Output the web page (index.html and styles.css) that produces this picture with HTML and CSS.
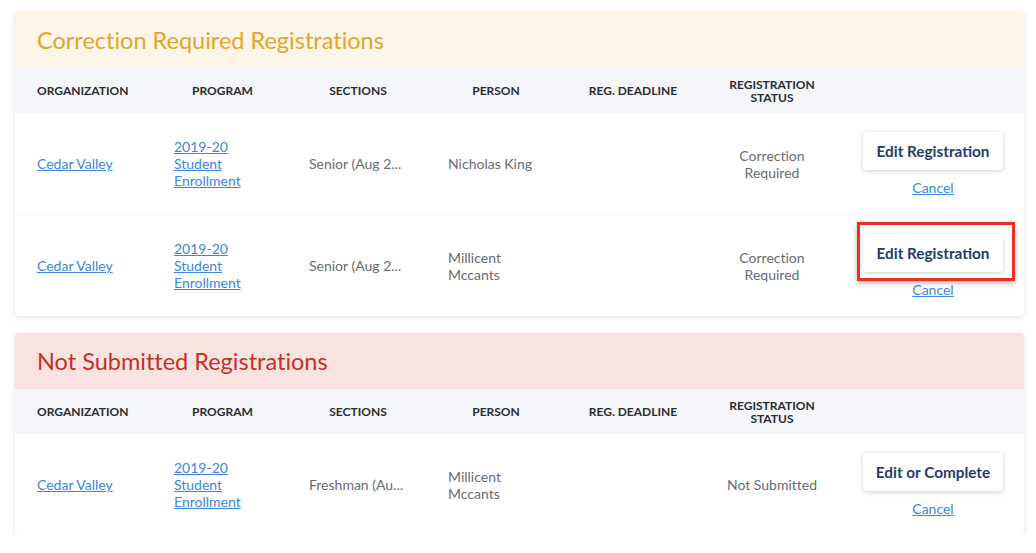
FILE: index.html
```html
<!DOCTYPE html>
<html lang="en">
<head>
    <meta charset="UTF-8">
    <title>Registrations</title>
    <link rel="stylesheet" href="styles.css">
</head>
<body>
    <div class="page">
        <section class="card">
            <h2 class="card-title warn">Correction Required Registrations</h2>
            <div class="row head">
                <div class="cell left">ORGANIZATION</div>
                <div class="cell">PROGRAM</div>
                <div class="cell">SECTIONS</div>
                <div class="cell">PERSON</div>
                <div class="cell">REG. DEADLINE</div>
                <div class="cell">REGISTRATION<br>STATUS</div>
                <div class="cell"></div>
            </div>
            <div class="row">
                <div class="cell left"><a href="#">Cedar Valley</a></div>
                <div class="cell left"><a href="#">2019-20<br>Student<br>Enrollment</a></div>
                <div class="cell left">Senior (Aug 2...</div>
                <div class="cell left person">Nicholas King</div>
                <div class="cell"></div>
                <div class="cell">Correction<br>Required</div>
                <div class="cell actions">
                    <button class="btn">Edit Registration</button>
                    <a href="#">Cancel</a>
                </div>
            </div>
            <div class="row">
                <div class="cell left"><a href="#">Cedar Valley</a></div>
                <div class="cell left"><a href="#">2019-20<br>Student<br>Enrollment</a></div>
                <div class="cell left">Senior (Aug 2...</div>
                <div class="cell left person">Millicent<br>Mccants</div>
                <div class="cell"></div>
                <div class="cell">Correction<br>Required</div>
                <div class="cell actions">
                    <span class="mark">
                        <button class="btn">Edit Registration</button>
                    </span>
                    <a href="#">Cancel</a>
                </div>
            </div>
        </section>

        <section class="card">
            <h2 class="card-title danger">Not Submitted Registrations</h2>
            <div class="row head">
                <div class="cell left">ORGANIZATION</div>
                <div class="cell">PROGRAM</div>
                <div class="cell">SECTIONS</div>
                <div class="cell">PERSON</div>
                <div class="cell">REG. DEADLINE</div>
                <div class="cell">REGISTRATION<br>STATUS</div>
                <div class="cell"></div>
            </div>
            <div class="row">
                <div class="cell left"><a href="#">Cedar Valley</a></div>
                <div class="cell left"><a href="#">2019-20<br>Student<br>Enrollment</a></div>
                <div class="cell left">Freshman (Au...</div>
                <div class="cell left person">Millicent<br>Mccants</div>
                <div class="cell"></div>
                <div class="cell">Not Submitted</div>
                <div class="cell actions">
                    <button class="btn">Edit or Complete</button>
                    <a href="#">Cancel</a>
                </div>
            </div>
        </section>
    </div>
</body>
</html>
```

FILE: styles.css
```css
body { margin: 0; background: #fff; font-family: 'Lato', 'Open Sans', sans-serif; color: #676c75; font-variant-ligatures: none; }
.page { padding: 12px 12px 0 15px; display: flex; flex-direction: column; gap: 17px; }
.card { background: #fff; border-radius: 4px; box-shadow: 0 1px 5px rgba(0,0,0,0.12); }
.card-title { margin: 0; height: 56px; display: flex; align-items: center; padding-left: 22px; font-size: 23.5px; font-weight: 400; border-radius: 4px 4px 0 0; }
.card-title.warn { background: #fcf5e8; color: #e3a52d; }
.card-title.danger { background: #f9e3df; color: #c5302a; }
.row { display: grid; grid-template-columns: 140px 135px 136px 140px 134px 144px 1fr; align-items: center; min-height: 101px; border-bottom: 1px solid #eef0f3; font-size: 14px; line-height: 17px; }
.row:last-child { border-bottom: none; }
.row.head { min-height: 45px; background: #f4f6f9; border-bottom: none; font-size: 12px; font-weight: 700; color: #2b2d31; line-height: 13px; }
.cell { text-align: center; padding: 0 4px; }
.cell.left { text-align: left; padding-left: 19px; }
.cell.person { padding-left: 22px; }
.row .cell:first-child { padding-left: 22px; }
a { color: #3a86e0; text-decoration: underline; }
.actions { display: flex; flex-direction: column; align-items: center; gap: 9px; padding-right: 6px; }
.btn { font-family: inherit; font-size: 15.3px; font-weight: 700; color: #253b6b; background: #fff; border: none; border-radius: 4px; height: 38px; min-width: 140px; padding: 0 13px; box-shadow: 0 1px 5px rgba(0,0,0,0.2); cursor: pointer; }
.mark { position: relative; display: inline-block; }
.mark::after { content: ""; position: absolute; left: -6px; right: -12px; top: -12px; bottom: -9px; border: 3px solid #e8321e; box-shadow: 0 2px 5px rgba(0,0,0,0.3); pointer-events: none; }
```
